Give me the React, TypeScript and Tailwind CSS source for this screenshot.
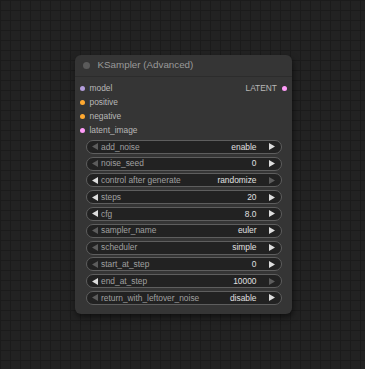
import React from 'react';

type Slot = { name: string; color: string };
type Widget = { label: string; value: string; left: boolean; right: boolean };

const inputs: Slot[] = [
  { name: 'model', color: '#b39ddb' },
  { name: 'positive', color: '#ffa931' },
  { name: 'negative', color: '#ffa931' },
  { name: 'latent_image', color: '#ff9cf9' },
];

const widgets: Widget[] = [
  { label: 'add_noise', value: 'enable', left: false, right: true },
  { label: 'noise_seed', value: '0', left: false, right: true },
  { label: 'control after generate', value: 'randomize', left: true, right: false },
  { label: 'steps', value: '20', left: true, right: true },
  { label: 'cfg', value: '8.0', left: true, right: true },
  { label: 'sampler_name', value: 'euler', left: false, right: true },
  { label: 'scheduler', value: 'simple', left: false, right: true },
  { label: 'start_at_step', value: '0', left: false, right: true },
  { label: 'end_at_step', value: '10000', left: true, right: false },
  { label: 'return_with_leftover_noise', value: 'disable', left: false, right: true },
];

const Arrow = ({ dir, on }: { dir: 'left' | 'right'; on: boolean }) => (
  <svg width="6" height="7" viewBox="0 0 6 7" className="shrink-0">
    <polygon
      points={dir === 'left' ? '0,3.5 6,0 6,7' : '6,3.5 0,0 0,7'}
      fill={on ? '#dddddd' : '#5c5c5c'}
    />
  </svg>
);

export default function App() {
  return (
    <div
      className="w-[365px] h-[369px] overflow-hidden pt-[55px] pl-[75px] bg-[#222222] bg-[linear-gradient(to_right,#1b1b1b_1px,transparent_1px),linear-gradient(to_bottom,#1b1b1b_1px,transparent_1px)] bg-[size:10px_10px]"
      style={{ fontFamily: '"Liberation Sans", Arial, sans-serif' }}
    >
      <div className="w-[217px] rounded-[6px] bg-[#353535] shadow-[1px_3px_6px_rgba(0,0,0,0.55)]">
        {/* Title */}
        <div className="h-[21.5px] flex items-center border-b border-[#2c2c2c] pl-[8px]">
          <div className="w-[6.5px] h-[6.5px] rounded-full bg-[#5b5b5b]" />
          <span className="ml-[8px] text-[9.8px] text-[#9a9a9a]">KSampler (Advanced)</span>
        </div>

        {/* Slots */}
        <div className="relative pt-[4.5px] flex flex-col">
          {inputs.map((s) => (
            <div key={s.name} className="h-[14px] flex items-center pl-[4.5px]">
              <div className="w-[5px] h-[5px] rounded-full" style={{ background: s.color }} />
              <span className="ml-[5px] text-[8.4px] text-[#b8b8b8]">{s.name}</span>
            </div>
          ))}
          <div className="absolute right-[5px] top-[4.5px] h-[14px] flex items-center">
            <span className="text-[8.4px] text-[#b8b8b8]">LATENT</span>
            <div className="ml-[5px] w-[5px] h-[5px] rounded-full bg-[#ff9cf9]" />
          </div>
        </div>

        {/* Widgets */}
        <div className="flex flex-col gap-[2.8px] px-[10.5px] pt-[2.8px] pb-[9px]">
          {widgets.map((w) => (
            <div
              key={w.label}
              className="h-[14px] flex items-center rounded-full bg-[#222222] border border-[#5e5e5e] pl-[5px] pr-[6px]"
            >
              <Arrow dir="left" on={w.left} />
              <span className="ml-[3.5px] text-[8.4px] text-[#a0a0a0] whitespace-nowrap">{w.label}</span>
              <span className="ml-auto mr-[12px] text-[8.4px] text-[#e0e0e0] whitespace-nowrap">{w.value}</span>
              <Arrow dir="right" on={w.right} />
            </div>
          ))}
        </div>
      </div>
    </div>
  );
}
